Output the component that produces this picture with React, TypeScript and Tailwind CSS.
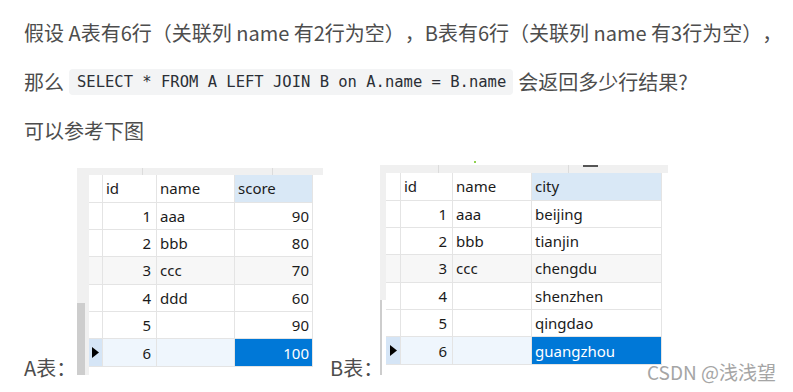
import React from "react";

type Row = { id: string; name: string; last: string };

const rowsA: Row[] = [
  { id: "1", name: "aaa", last: "90" },
  { id: "2", name: "bbb", last: "80" },
  { id: "3", name: "ccc", last: "70" },
  { id: "4", name: "ddd", last: "60" },
  { id: "5", name: "", last: "90" },
  { id: "6", name: "", last: "100" },
];

const rowsB: Row[] = [
  { id: "1", name: "aaa", last: "beijing" },
  { id: "2", name: "bbb", last: "tianjin" },
  { id: "3", name: "ccc", last: "chengdu" },
  { id: "4", name: "", last: "shenzhen" },
  { id: "5", name: "", last: "qingdao" },
  { id: "6", name: "", last: "guangzhou" },
];

function Arrow() {
  return (
    <svg width="7" height="11" viewBox="0 0 7 11">
      <polygon points="0,0 7,5.5 0,11" fill="#000" />
    </svg>
  );
}

const cell = "border-r border-b border-[#e4e4e4] flex items-center h-full overflow-hidden whitespace-nowrap";

function DataTable({
  variant,
  rows,
  lastHeader,
  lastRight,
}: {
  variant: "A" | "B";
  rows: Row[];
  lastHeader: string;
  lastRight: boolean;
}) {
  const gridCls =
    variant === "A"
      ? "grid grid-cols-[14px_54px_78px_78px] w-[224px]"
      : "grid grid-cols-[15px_52px_79px_130px] w-[276px]";
  return (
    <div className="flex flex-col bg-white">
      <div className={gridCls + " h-[27.5px]"}>
        <div className={cell} />
        <div className={cell + " pl-[3px]"}>id</div>
        <div className={cell + " pl-[3px]"}>name</div>
        <div className={cell + " pl-[3px] bg-[#d9e8f6]"}>{lastHeader}</div>
      </div>
      {rows.map((r, i) => {
        const sel = i === 5;
        const rowBg = sel ? "bg-[#eff6fd]" : i === 2 ? "bg-[#f7f7f7]" : "bg-white";
        return (
          <div key={i} className={gridCls + " h-[27.4px] " + rowBg}>
            <div className={cell + (sel ? " bg-[#d5e5f6] justify-center" : "")}>{sel ? <Arrow /> : null}</div>
            <div className={cell + " justify-end pr-[5px]"}>{r.id}</div>
            <div className={cell + " pl-[3px]"}>{r.name}</div>
            <div
              className={
                cell +
                (lastRight ? " justify-end pr-[3px]" : " pl-[3px]") +
                (sel ? " bg-[#0078d7] text-white" : "")
              }
            >
              {r.last}
            </div>
          </div>
        );
      })}
    </div>
  );
}

export default function App() {
  return (
    <div
      className="relative w-[793px] h-[392px] bg-white text-[#4d4d4d] overflow-hidden [text-spacing-trim:space-all]"
      style={{ fontFamily: '"Noto Sans CJK SC", "Noto Sans", sans-serif' }}
    >
      <div className="pl-6 pt-[17px] text-[20px] leading-[32px]">
        <p className="whitespace-nowrap">假设 A表有6行（关联列 name 有2行为空），B表有6行（关联列 name 有3行为空），</p>
        <p className="mt-[17px] flex items-center whitespace-nowrap">
          <span>那么</span>
          <code
            className="ml-[5px] mr-[5px] rounded-[4px] bg-[#f3f4f5] pl-[8px] pr-[7px] h-[26px] flex items-center text-[15.5px] text-[#2b2f36]"
            style={{ fontFamily: '"DejaVu Sans Mono", "Liberation Mono", monospace' }}
          >
            SELECT * FROM A LEFT JOIN B on A.name = B.name
          </code>
          <span>会返回多少行结果?</span>
        </p>
        <p className="mt-[17px]">可以参考下图</p>
        <div className="mt-[18px] flex items-end">
          <span className="w-[53px] whitespace-nowrap leading-[20px] mb-[-3px]">A表：</span>
          <div
            className="relative w-[246px] h-[207px] bg-[#f0f0f0] flex flex-col text-[15px] leading-[20px] text-[#1b1b1b]"
            style={{ fontFamily: '"Noto Sans", "Noto Sans CJK SC", sans-serif' }}
          >
            <div className="h-[7px] shrink-0 relative">
              <span className="absolute left-[65px] top-0 h-[7px] w-px bg-[#dcdcdc]" />
              <span className="absolute left-[195px] top-0 h-[7px] w-px bg-[#dcdcdc]" />
            </div>
            <div className="flex flex-1">
              <div className="w-[12px] flex flex-col">
                <div className="h-[128px]" />
                <div className="flex-1 w-[8px] bg-[#cdcdcd]" />
              </div>
              <div className="flex-1 bg-white">
                <DataTable variant="A" rows={rowsA} lastHeader="score" lastRight />
              </div>
            </div>
          </div>
          <span className="ml-[7px] w-[50px] whitespace-nowrap leading-[20px] mb-[-3px]">B表：</span>
          <div
            className="relative w-[288px] h-[210px] bg-[#f0f0f0] flex flex-col text-[15px] leading-[20px] text-[#1b1b1b]"
            style={{ fontFamily: '"Noto Sans", "Noto Sans CJK SC", sans-serif' }}
          >
            <div className="h-[8px] shrink-0 relative">
              <span className="absolute left-[58px] top-0 h-[8px] w-px bg-[#dcdcdc]" />
              <span className="absolute left-[188px] top-0 h-[8px] w-px bg-[#dcdcdc]" />
              <span className="absolute left-[94px] top-[-4px] h-[2px] w-[2px] bg-[#8fd14f]" />
              <span className="absolute left-[203px] top-0 h-[2px] w-[15px] bg-[#555]" />
            </div>
            <div className="flex flex-1">
              <div className="w-[6px] flex flex-col bg-white">
                <div className="h-[127px] bg-[#f0f0f0]" />
                <div className="flex-1 w-[2px] bg-[#cdcdcd]" />
              </div>
              <div className="flex-1 bg-white">
                <DataTable variant="B" rows={rowsB} lastHeader="city" lastRight={false} />
              </div>
            </div>
          </div>
        </div>
      </div>
      <div className="absolute left-[647px] top-[359px] text-[19px] leading-[26px] text-[#a5a5a5]">
        CSDN @浅浅望
      </div>
    </div>
  );
}
